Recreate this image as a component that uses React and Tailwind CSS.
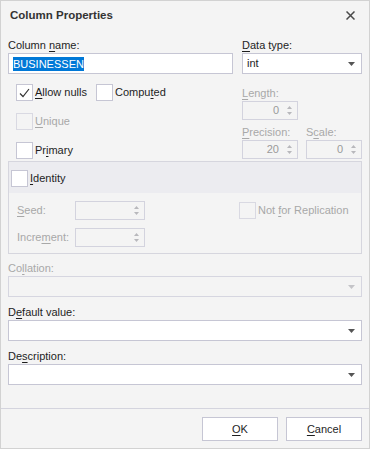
import React from "react";

const U = ({ children }) => <span className="underline underline-offset-[2px]">{children}</span>;

function Arrow({ disabled }) {
  return (
    <svg width="7" height="4" viewBox="0 0 7 4" className="shrink-0">
      <path d="M0 0h7L3.5 4z" fill={disabled ? "#c4c4c8" : "#555555"} />
    </svg>
  );
}

function SpinArrows() {
  return (
    <div className="flex flex-col items-center gap-[3px]">
      <svg width="5" height="3" viewBox="0 0 5 3">
        <path d="M0 3h5L2.5 0z" fill="#b8b8bc" />
      </svg>
      <svg width="5" height="3" viewBox="0 0 5 3">
        <path d="M0 0h5L2.5 3z" fill="#b8b8bc" />
      </svg>
    </div>
  );
}

function Spin({ value, className = "" }) {
  return (
    <div
      className={`flex h-[19px] items-center justify-end border border-[#d3d3de] pr-[5px] text-[#9a9a9a] ${className}`}
    >
      <span className="mr-[8px]">{value}</span>
      <SpinArrows />
    </div>
  );
}

function Combo({ value, disabled, className = "" }) {
  return (
    <div
      className={`flex h-[21px] items-center justify-between border pl-[4px] pr-[6px] ${
        disabled ? "border-[#d6d6e0] bg-transparent" : "border-[#c6c6d4] bg-white"
      } ${className}`}
    >
      <span>{value}</span>
      <Arrow disabled={disabled} />
    </div>
  );
}

function Check({ checked, disabled, label, className = "" }) {
  return (
    <div className={`flex h-[17px] items-center ${className}`}>
      <div
        className={`flex h-[17px] w-[17px] shrink-0 items-center justify-center border ${
          disabled ? "border-[#d9d9e2]" : "border-[#c6c6d4] bg-white"
        }`}
      >
        {checked ? (
          <svg width="11" height="10" viewBox="0 0 11 10">
            <path d="M1 5.5l3 3L10 1" fill="none" stroke="#333" strokeWidth="1.2" />
          </svg>
        ) : null}
      </div>
      <span className={`ml-[2px] ${disabled ? "text-[#a8a8a8]" : ""}`}>{label}</span>
    </div>
  );
}

function Field({ label, children, disabled }) {
  return (
    <div className="flex flex-col gap-[1px]">
      <div className={`h-[14px] leading-[14px] ${disabled ? "text-[#a8a8a8]" : ""}`}>{label}</div>
      {children}
    </div>
  );
}

export default function App() {
  return (
    <div
      className="flex h-[449px] w-[370px] flex-col border border-[#d2d2d2] bg-[#f4f4f4] text-[11px] text-[#1e1e1e]"
      style={{ fontFamily: '"Liberation Sans", Arial, sans-serif' }}
    >
      <div className="flex h-[29px] shrink-0 items-center justify-between pl-[9px] pr-[14px]">
        <span className="text-[11.5px] font-bold text-[#333333]">Column Properties</span>
        <svg width="9" height="9" viewBox="0 0 9 9">
          <path d="M0.5 0.5l8 8M8.5 0.5l-8 8" stroke="#4a4a4a" strokeWidth="1.5" />
        </svg>
      </div>

      <div className="flex flex-col px-[7px] pt-[8px]">
        <div className="flex gap-[9px]">
          <div className="w-[225px]">
            <Field label={<>Column <U>n</U>ame:</>}>
              <div className="flex h-[21px] items-center border border-[#c6c6d4] bg-white pl-[4px]">
                <span className="bg-[#0078d7] leading-[14px] text-white">BUSINESSEN</span>
              </div>
            </Field>
          </div>
          <div className="flex-1">
            <Field label={<><U>D</U>ata type:</>}>
              <Combo value="int" />
            </Field>
          </div>
        </div>

        <div className="flex h-[86px] gap-[9px] overflow-hidden">
          <div className="flex w-[225px] flex-col gap-[12px] pl-[8px] pt-[10px]">
            <div className="flex">
              <Check checked className="w-[80px]" label={<><U>A</U>llow nulls</>} />
              <Check label={<>Compu<U>t</U>ed</>} />
            </div>
            <Check disabled label={<><U>U</U>nique</>} />
            <Check label={<>Pr<U>i</U>mary</>} />
          </div>
          <div className="flex flex-1 flex-col gap-[5px] pt-[12px] text-[#a8a8a8]">
            <Field label={<><U>L</U>ength:</>}>
              <Spin value="0" className="w-[56px]" />
            </Field>
            <div className="flex gap-[8px]">
              <div className="w-[56px]">
                <Field label={<><U>P</U>recision:</>}>
                  <Spin value="20" />
                </Field>
              </div>
              <div className="flex-1">
                <Field label={<>S<U>c</U>ale:</>}>
                  <Spin value="0" />
                </Field>
              </div>
            </div>
          </div>
        </div>

        <div className="mt-[1px] border border-[#d6d6de]">
          <div className="flex h-[31px] items-center bg-[#ececf0] pl-[2px] pt-[2px]">
            <Check label={<><U>I</U>dentity</>} />
          </div>
          <div className="flex h-[60px] text-[#a8a8a8]">
            <div className="flex w-[230px] flex-col gap-[8px] pl-[8px] pt-[8px]">
              <div className="flex items-center">
                <span className="w-[58px]">
                  <U>S</U>eed:
                </span>
                <Spin value="" className="w-[70px]" />
              </div>
              <div className="flex items-center">
                <span className="w-[58px]">
                  Incre<U>m</U>ent:
                </span>
                <Spin value="" className="w-[70px]" />
              </div>
            </div>
            <div className="pt-[9px]">
              <Check disabled label={<>Not <U>f</U>or Replication</>} />
            </div>
          </div>
        </div>

        <div className="mt-[7px] flex flex-col gap-[8px]">
          <Field disabled label={<>Co<U>l</U>lation:</>}>
            <Combo value="" disabled />
          </Field>
          <Field label={<>D<U>e</U>fault value:</>}>
            <Combo value="" />
          </Field>
          <Field label={<>De<U>s</U>cription:</>}>
            <Combo value="" />
          </Field>
        </div>
      </div>

      <div className="flex-1" />

      <div className="flex h-[40px] shrink-0 justify-end gap-[8px] border-t border-[#d4d4de] pr-[7px] pt-[8px]">
        <button className="flex h-[24px] w-[76px] items-center justify-center border border-[#c6c6d4] bg-white">
          <U>O</U>K
        </button>
        <button className="flex h-[24px] w-[76px] items-center justify-center border border-[#c6c6d4] bg-white">
          <U>C</U>ancel
        </button>
      </div>
    </div>
  );
}
